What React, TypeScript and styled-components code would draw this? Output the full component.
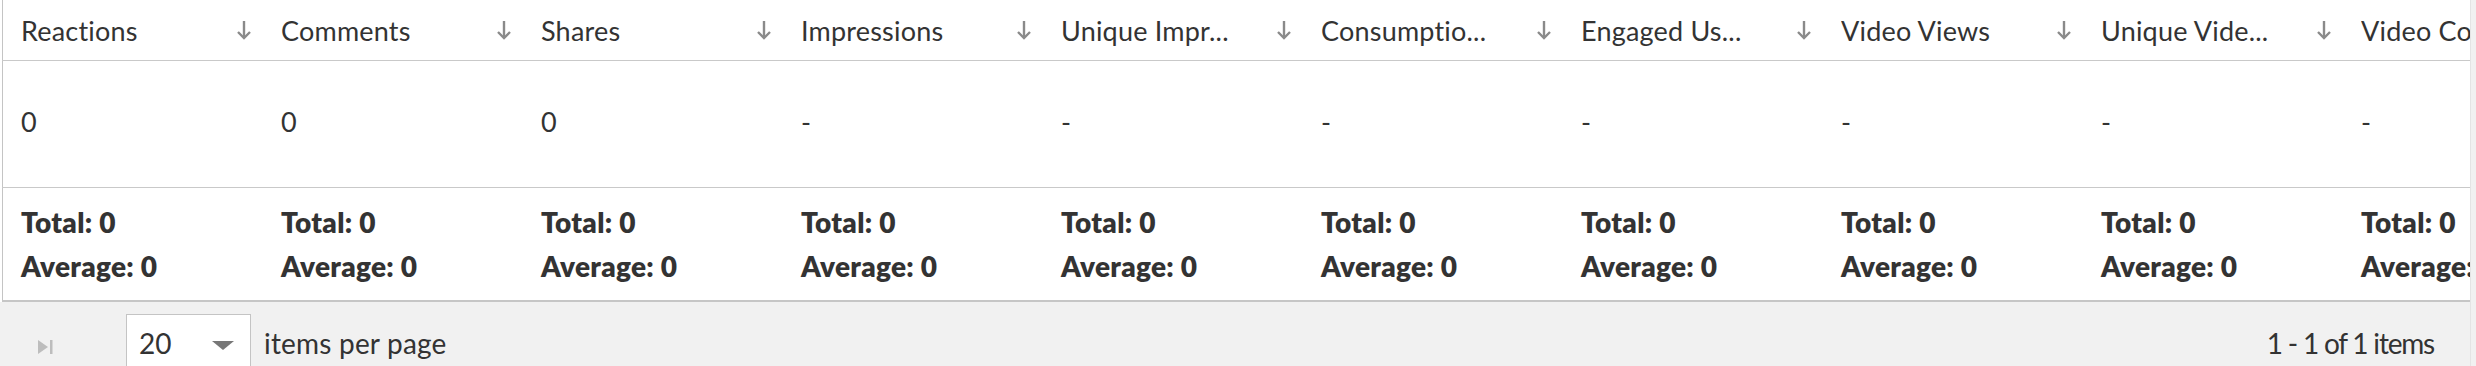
import styled, { createGlobalStyle } from 'styled-components';

const GlobalStyle = createGlobalStyle`
  body {
    margin: 0;
    font-family: Lato, "Liberation Sans", sans-serif;
    color: #333;
    background: #fff;
  }
`;

const columns = [
    {label: 'Reactions', value: '0'},
    {label: 'Comments', value: '0'},
    {label: 'Shares', value: '0'},
    {label: 'Impressions', value: '-'},
    {label: 'Unique Impr...', value: '-'},
    {label: 'Consumptio...', value: '-'},
    {label: 'Engaged Us...', value: '-'},
    {label: 'Video Views', value: '-'},
    {label: 'Unique Vide...', value: '-'},
    {label: 'Video Completions', value: '-'},
];

function SortArrow() {
    return (
        <svg width="16" height="20" viewBox="0 0 16 20">
            <path d="M8 1 V18" stroke="#8a8a8a" strokeWidth="2.4" fill="none" />
            <path d="M2 12 L8 18 L14 12" stroke="#8a8a8a" strokeWidth="2.4" fill="none" />
        </svg>
    );
}

function LastPageIcon() {
    return (
        <svg width="16" height="16" viewBox="0 0 16 16">
            <path d="M0 1 L10 8 L0 15 Z" fill="#bdbdbd" />
            <rect x="12" y="1" width="2.5" height="14" fill="#bdbdbd" />
        </svg>
    );
}

function App() {

    return (
        <Page>
            <GlobalStyle />
            <Main>
                <TableArea>
                    <Grid>
                        <Row $height={61} $border="1px solid #c9c9c9">
                            {columns.map((c) => (
                                <HeadCell key={c.label}>
                                    <HeadLabel>{c.label}</HeadLabel>
                                    <SortArrow />
                                </HeadCell>
                            ))}
                        </Row>
                        <Row $height={127} $border="1px solid #c9c9c9">
                            {columns.map((c) => (
                                <BodyCell key={c.label}>{c.value}</BodyCell>
                            ))}
                        </Row>
                        <Row $height={114} $border="2px solid #c6c6c6">
                            {columns.map((c) => (
                                <FootCell key={c.label}>
                                    <span>Total: 0</span>
                                    <span>Average: 0</span>
                                </FootCell>
                            ))}
                        </Row>
                    </Grid>
                </TableArea>
                <Pager>
                    <PagerLeft>
                        <IconButton><LastPageIcon /></IconButton>
                        <Select>
                            <span>20</span>
                            <Caret />
                        </Select>
                        <PagerText>items per page</PagerText>
                    </PagerLeft>
                    <RangeText>1 - 1 of 1 items</RangeText>
                </Pager>
            </Main>
            <ScrollStrip />
        </Page>
    );
}

export default App;


const Page = styled.div`
    display: flex;
    height: 366px;
    overflow: hidden;
`;

const Main = styled.div`
    flex: 1;
    min-width: 0;
    display: flex;
    flex-direction: column;
    overflow: hidden;
`;

const TableArea = styled.div`
    flex-shrink: 0;
    overflow: hidden;
    padding-left: 2px;
`;

const Grid = styled.div`
    border-left: 1px solid #c4c4c4;
    display: flex;
    flex-direction: column;
`;

const Row = styled.div<{ $height: number; $border: string }>`
    display: grid;
    grid-template-columns: repeat(10, 260px);
    height: ${(p) => p.$height}px;
    box-sizing: border-box;
    border-bottom: ${(p) => p.$border};
    margin-left: -1px;
    width: calc(100% + 1px);
`;

const HeadCell = styled.div`
    display: flex;
    align-items: center;
    justify-content: space-between;
    padding: 0 10px 0 19px;
    font-size: 27px;
    letter-spacing: 0.2px;
    color: #333;
    white-space: nowrap;
    overflow: hidden;
`;

const HeadLabel = styled.span`
    overflow: hidden;
    text-overflow: ellipsis;
    max-width: 205px;
`;

const BodyCell = styled.div`
    display: flex;
    align-items: center;
    padding: 0 19px 5px;
    font-size: 27px;
    color: #333;
`;

const FootCell = styled.div`
    display: flex;
    flex-direction: column;
    justify-content: center;
    gap: 12px;
    padding: 0 19px;
    font-size: 28px;
    line-height: 32px;
    letter-spacing: 0.3px;
    font-weight: 800;
    color: #333;
    white-space: nowrap;
`;

const Pager = styled.div`
    background: #f1f1f1;
    height: 86px;
    flex-shrink: 0;
    display: flex;
    align-items: flex-start;
    justify-content: space-between;
    padding: 12px 36px 0 38px;
    box-sizing: border-box;
`;

const PagerLeft = styled.div`
    display: flex;
    align-items: flex-start;
`;

const IconButton = styled.span`
    display: flex;
    width: 88px;
    margin-top: 25px;
`;

const Select = styled.div`
    width: 125px;
    height: 64px;
    box-sizing: border-box;
    border: 1px solid #c4c4c4;
    background: #fff;
    display: flex;
    align-items: center;
    justify-content: space-between;
    padding: 0 16px 0 12px;
    height: 74px;
    padding-bottom: 16px;
    font-size: 28px;
    line-height: 34px;
    color: #333;
`;

const Caret = styled.span`
    width: 0;
    height: 0;
    border-left: 11px solid transparent;
    border-right: 11px solid transparent;
    border-top: 9px solid #777;
    margin-top: 4px;
`;

const PagerText = styled.span`
    font-size: 28px;
    line-height: 34px;
    letter-spacing: 0.2px;
    color: #333;
    margin: 12px 0 0 13px;
`;

const RangeText = styled(PagerText)`
    letter-spacing: -1.2px;
    margin-left: 0;
`;

const ScrollStrip = styled.div`
    width: 5px;
    flex-shrink: 0;
    background: #f1f1f1;
    border-left: 1px solid #e4e4e4;
`;
